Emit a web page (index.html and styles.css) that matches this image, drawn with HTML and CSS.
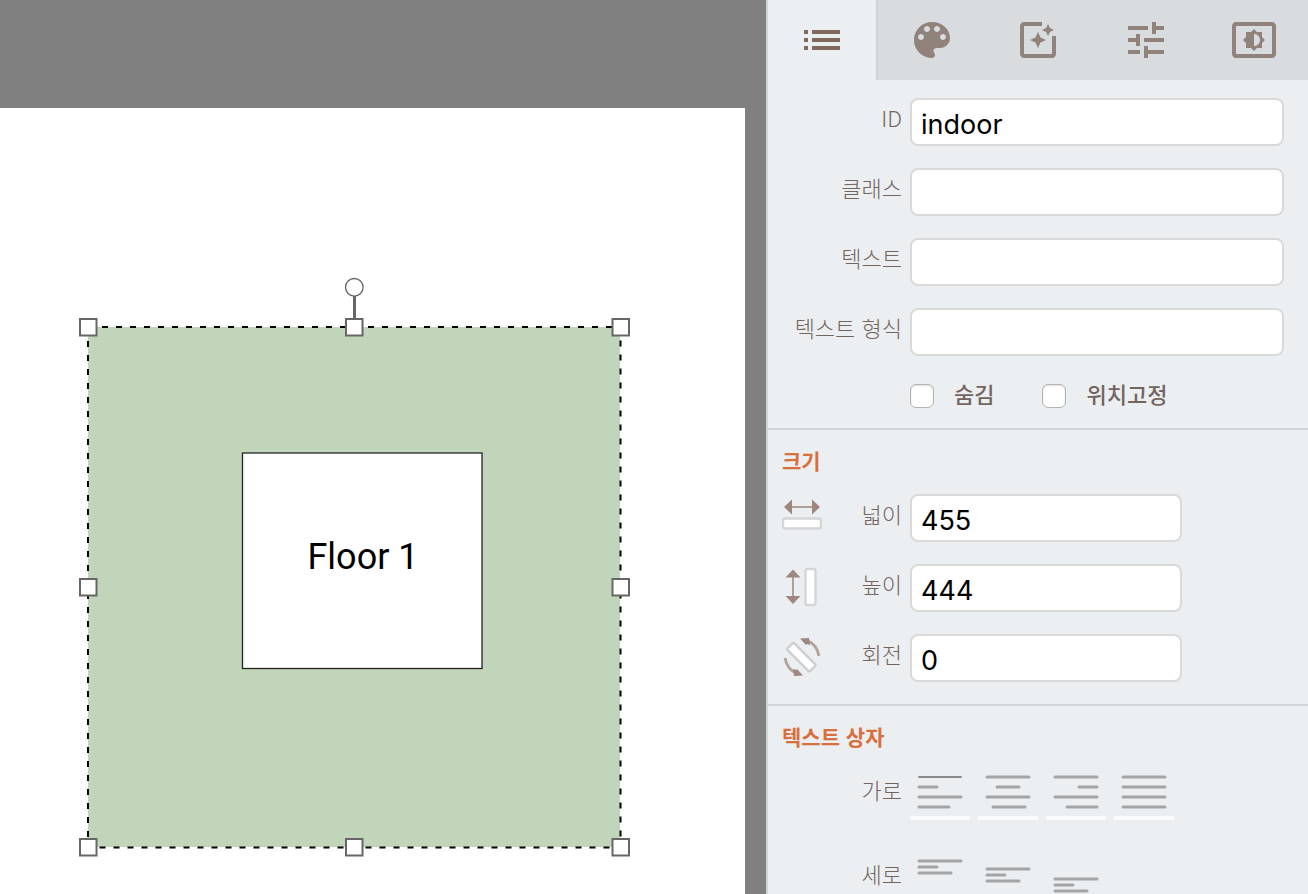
FILE: index.html
```html
<!DOCTYPE html>
<html lang="ko">
<head>
<meta charset="utf-8">
<title>indoor</title>
<link rel="stylesheet" href="styles.css">
</head>
<body>
<div class="app">
  <main class="stage">
    <div class="sheet">
      <svg class="drawing" width="745" height="786" viewBox="0 108 745 786">
        <rect x="88" y="327" width="532" height="520" fill="#c1d5ba"/>
        <rect x="242.500" y="453" width="239.500" height="215.500" fill="#fff" stroke="#222" stroke-width="1.300"/>
        <text class="shape-label" x="363" y="569" text-anchor="middle">Floor 1</text>
        <rect x="88" y="327" width="532.500" height="520.500" fill="none" stroke="#000" stroke-width="2" stroke-dasharray="6 8"/>
        <path d="M354.500 296v24" stroke="#666" stroke-width="3"/>
        <g fill="#fff" stroke="#666" stroke-width="2">
          <circle cx="354.300" cy="287.300" r="8.800" stroke-width="1.300"/>
          <rect x="80" y="319" width="16.500" height="16.500"/>
          <rect x="346" y="319" width="16.500" height="16.500"/>
          <rect x="612.500" y="319" width="16.500" height="16.500"/>
          <rect x="80" y="579" width="16.500" height="16.500"/>
          <rect x="612.500" y="579" width="16.500" height="16.500"/>
          <rect x="80" y="839" width="16.500" height="16.500"/>
          <rect x="346" y="839" width="16.500" height="16.500"/>
          <rect x="612.500" y="839" width="16.500" height="16.500"/>
        </g>
      </svg>
    </div>
  </main>

  <aside class="panel">
    <nav class="tabs">
      <button class="tab tab-active" type="button" aria-label="속성">
        <svg class="tab-icon" viewBox="0 0 24 24"><path d="M3 7h2v2H3zM3 11h2v2H3zM3 15h2v2H3zM7 7h14v2H7zM7 11h14v2H7zM7 15h14v2H7z"/></svg>
      </button>
      <button class="tab tab-first" type="button" aria-label="스타일">
        <svg class="tab-icon" viewBox="0 0 24 24"><path d="M12 3c-4.970 0-9 4.030-9 9s4.030 9 9 9c.830 0 1.500-.670 1.500-1.500 0-.390-.150-.740-.390-1.010-.230-.260-.380-.610-.380-.990 0-.830.670-1.500 1.500-1.500H16c2.760 0 5-2.240 5-5 0-4.420-4.030-8-9-8zm-5.500 9c-.830 0-1.500-.670-1.500-1.500S5.670 9 6.500 9 8 9.670 8 10.500 7.330 12 6.500 12zm3-4C8.670 8 8 7.330 8 6.500S8.670 5 9.500 5s1.500.670 1.500 1.500S10.330 8 9.500 8zm5 0c-.830 0-1.500-.670-1.500-1.500S13.670 5 14.500 5s1.500.670 1.500 1.500S15.330 8 14.500 8zm3 4c-.830 0-1.500-.670-1.500-1.500S16.670 9 17.500 9s1.500.670 1.500 1.500-.670 1.500-1.500 1.500z"/></svg>
      </button>
      <button class="tab" type="button" aria-label="효과">
        <svg class="tab-icon" viewBox="0 0 24 24"><path d="M19.020 10v9H5V5h9V3H5.020c-1.100 0-2 .9-2 2v14c0 1.100.9 2 2 2H19c1.100 0 2-.9 2-2v-9h-1.980zM17 10l.940-2.060L20 7l-2.060-.940L17 4l-.940 2.060L14 7l2.060.940zM13.250 10.750L12 8l-1.250 2.750L8 12l2.750 1.250L12 16l1.250-2.750L16 12z"/></svg>
      </button>
      <button class="tab" type="button" aria-label="설정">
        <svg class="tab-icon" viewBox="0 0 24 24"><path d="M3 17v2h6v-2H3zM3 5v2h10V5H3zm10 16v-2h8v-2h-8v-2h-2v6h2zM7 9v2H3v2h4v2h2V9H7zm14 4v-2H11v2h10zm-6-4h2V7h4V5h-4V3h-2v6z"/></svg>
      </button>
      <button class="tab" type="button" aria-label="밝기">
        <svg class="tab-icon" viewBox="0 0 24 24"><path d="M21 3H3c-1.100 0-2 .9-2 2v14c0 1.100.9 2 2 2h18c1.100 0 2-.9 2-2V5c0-1.100-.9-2-2-2zm0 16.010H3V4.990h18v14.020zM8 16h2.500l1.500 1.500 1.500-1.500H16v-2.500l1.500-1.500-1.500-1.500V8h-2.500L12 6.500 10.500 8H8v2.500L6.500 12 8 13.500V16zm4-7c1.660 0 3 1.340 3 3s-1.340 3-3 3V9z"/></svg>
      </button>
    </nav>

    <section class="group">
      <div class="row">
        <label class="row-label" for="f-id">ID</label>
        <input class="field" id="f-id" type="text" value="indoor">
      </div>
      <div class="row">
        <label class="row-label" for="f-class">클래스</label>
        <input class="field" id="f-class" type="text">
      </div>
      <div class="row">
        <label class="row-label" for="f-text">텍스트</label>
        <input class="field" id="f-text" type="text">
      </div>
      <div class="row">
        <label class="row-label" for="f-format">텍스트 형식</label>
        <input class="field" id="f-format" type="text">
      </div>
      <div class="checks">
        <label class="check"><input class="check-box" type="checkbox"><span>숨김</span></label>
        <label class="check"><input class="check-box" type="checkbox"><span>위치고정</span></label>
      </div>
    </section>

    <section class="group">
      <h2 class="group-title">크기</h2>
      <div class="row row-icon">
        <svg class="row-glyph" viewBox="0 0 40 48">
          <path d="M8 13h24" stroke="#b09f98" stroke-width="2"/>
          <path d="M2 13l8-7.500v15zM38 13l-8-7.500v15z" fill="#9e877e"/>
          <rect x="1" y="24.500" width="38" height="10" rx="2" fill="#fff" stroke="#d3d5d7" stroke-width="2.400"/>
        </svg>
        <label class="row-label" for="f-width">넓이</label>
        <input class="field" id="f-width" type="text" value="455">
      </div>
      <div class="row row-icon">
        <svg class="row-glyph" viewBox="0 0 40 48">
          <path d="M11 12v24" stroke="#b09f98" stroke-width="2"/>
          <path d="M11 5.500l-7.500 8h15zM11 40l-7.500-8h15z" fill="#9e877e"/>
          <rect x="23.500" y="5" width="10" height="36" rx="2" fill="#fff" stroke="#d3d5d7" stroke-width="2.400"/>
        </svg>
        <label class="row-label" for="f-height">높이</label>
        <input class="field" id="f-height" type="text" value="444">
      </div>
      <div class="row row-icon">
        <svg class="row-glyph" viewBox="0 0 40 48">
          <rect x="3.500" y="18.500" width="32" height="9.500" rx="1" fill="#fff" stroke="#cdcfd1" stroke-width="2.400" transform="rotate(45 19.500 23)"/>
          <path d="M25 6.500q10 4 12 15.500M15 39.500q-10-4-12-15.500" fill="none" stroke="#b3a29b" stroke-width="2.800"/>
          <path d="M18 4.500l9-.5 1 7-3-1-1 1zM21 41.500l-9 .5-1-7 3 1 1-1z" fill="#9e877e"/>
        </svg>
        <label class="row-label" for="f-angle">회전</label>
        <input class="field" id="f-angle" type="text" value="0">
      </div>
    </section>

    <section class="group">
      <h2 class="group-title">텍스트 상자</h2>
      <div class="row align-row">
        <span class="row-label">가로</span>
        <div class="aligns">
          <button class="align" type="button" aria-label="왼쪽"><svg class="align-icon" viewBox="0 0 60 46"><path d="M9 17h18M9 27h42M9 37h30"/><path d="M9 7h42" stroke="#8c8c8c" stroke-width="2"/></svg></button>
          <button class="align" type="button" aria-label="가운데"><svg class="align-icon" viewBox="0 0 60 46"><path d="M9 7h42M19 17h22M9 27h42M15 37h32"/></svg></button>
          <button class="align" type="button" aria-label="오른쪽"><svg class="align-icon" viewBox="0 0 60 46"><path d="M9 7h42M33 17h18M9 27h42M21 37h30"/></svg></button>
          <button class="align" type="button" aria-label="양쪽"><svg class="align-icon" viewBox="0 0 60 46"><path d="M9 7h42M9 17h42M9 27h42M9 37h42"/></svg></button>
        </div>
      </div>
      <div class="row align-row">
        <span class="row-label">세로</span>
        <div class="aligns">
          <button class="align" type="button" aria-label="위"><svg class="align-icon" viewBox="0 0 60 46"><path d="M9 7h42M9 13h18M9 19h32"/></svg></button>
          <button class="align" type="button" aria-label="중간"><svg class="align-icon" viewBox="0 0 60 46"><path d="M9 15h42M9 21h18M9 27h32"/></svg></button>
          <button class="align" type="button" aria-label="아래"><svg class="align-icon" viewBox="0 0 60 46"><path d="M9 25h42M9 31h18M9 37h32"/></svg></button>
        </div>
      </div>
    </section>
  </aside>
</div>
</body>
</html>
```
FILE: styles.css
```css
* {
  box-sizing: border-box;
}

body {
  margin: 0;
  font-family: "Noto Sans CJK KR", sans-serif;
  color: #73655e;
}

.app {
  display: grid;
  grid-template-columns: minmax(0, 1fr) 542px;
  height: 100vh;
  overflow: hidden;
}

.stage {
  display: flex;
  min-width: 0;
  padding: 108px 21px 0 0;
  background: #808080;
}

.sheet {
  flex: 1;
  min-width: 0;
  overflow: hidden;
  background: #fff;
}

.drawing {
  display: block;
}

.shape-label {
  font-family: Roboto, sans-serif;
  font-size: 36px;
  fill: #000;
}

.panel {
  min-height: 0;
  overflow: hidden;
  border-left: 2px solid #cfd6d8;
  background: #ebeff2;
}

.tabs {
  display: grid;
  grid-template-columns: repeat(5, 1fr);
  height: 80px;
}

.tab {
  display: flex;
  align-items: center;
  justify-content: center;
  padding: 0;
  border: 0;
  background: #d8dcdf;
  color: #91827b;
}

.tab-active {
  background: #ebeff2;
  color: #80695f;
}

.tab-first {
  padding-left: 2px;
  border-left: 2px solid #cfd3d6;
}

.tab-icon {
  width: 48px;
  height: 48px;
  fill: currentColor;
}

.group {
  display: flex;
  flex-direction: column;
  gap: 22px;
  padding: 18px 24px 22px 14px;
}

.group:first-of-type {
  padding-bottom: 20px;
}

.group + .group {
  border-top: 2px solid #cfd6d8;
}

.group-title {
  margin: 0;
  font-size: 21px;
  line-height: 24px;
  font-weight: 700;
  color: #d96f3d;
}

.row {
  display: grid;
  grid-template-columns: 120px minmax(0, 1fr);
  column-gap: 8px;
}

.row-icon {
  grid-template-columns: 40px 72px minmax(0, 272px);
}

.row-glyph {
  width: 40px;
  height: 48px;
}

.row-label {
  text-align: right;
  font-size: 22px;
  line-height: 38px;
  font-weight: 300;
  white-space: nowrap;
}

.field {
  width: 100%;
  height: 48px;
  padding: 4px 9px 0;
  border: 2px solid #d9d9d9;
  border-radius: 8px;
  background: #fff;
  font-family: Inter, sans-serif;
  font-size: 27px;
  color: #000;
}

.checks {
  display: flex;
  gap: 48px;
  height: 30px;
  padding: 6px 0 0 128px;
}

.check {
  display: flex;
  align-items: flex-start;
  gap: 20px;
  font-size: 22px;
  line-height: 18px;
  font-weight: 500;
}

.check-box {
  appearance: none;
  width: 24px;
  height: 24px;
  margin: 0;
  border: 1px solid #b3b3b3;
  border-radius: 6px;
  background: #fff;
  box-shadow: inset 0 1px 2px #ddd;
}

.align-row + .align-row {
  margin-top: 12px;
}

.aligns {
  display: flex;
  gap: 8px;
}

.align {
  padding: 0;
  border: 0;
  border-bottom: 4px solid #f9fbfd;
  background: none;
}

.align-icon {
  display: block;
  width: 60px;
  height: 46px;
  fill: none;
  stroke: #a3a5a7;
  stroke-width: 3;
  stroke-linecap: round;
}
```
